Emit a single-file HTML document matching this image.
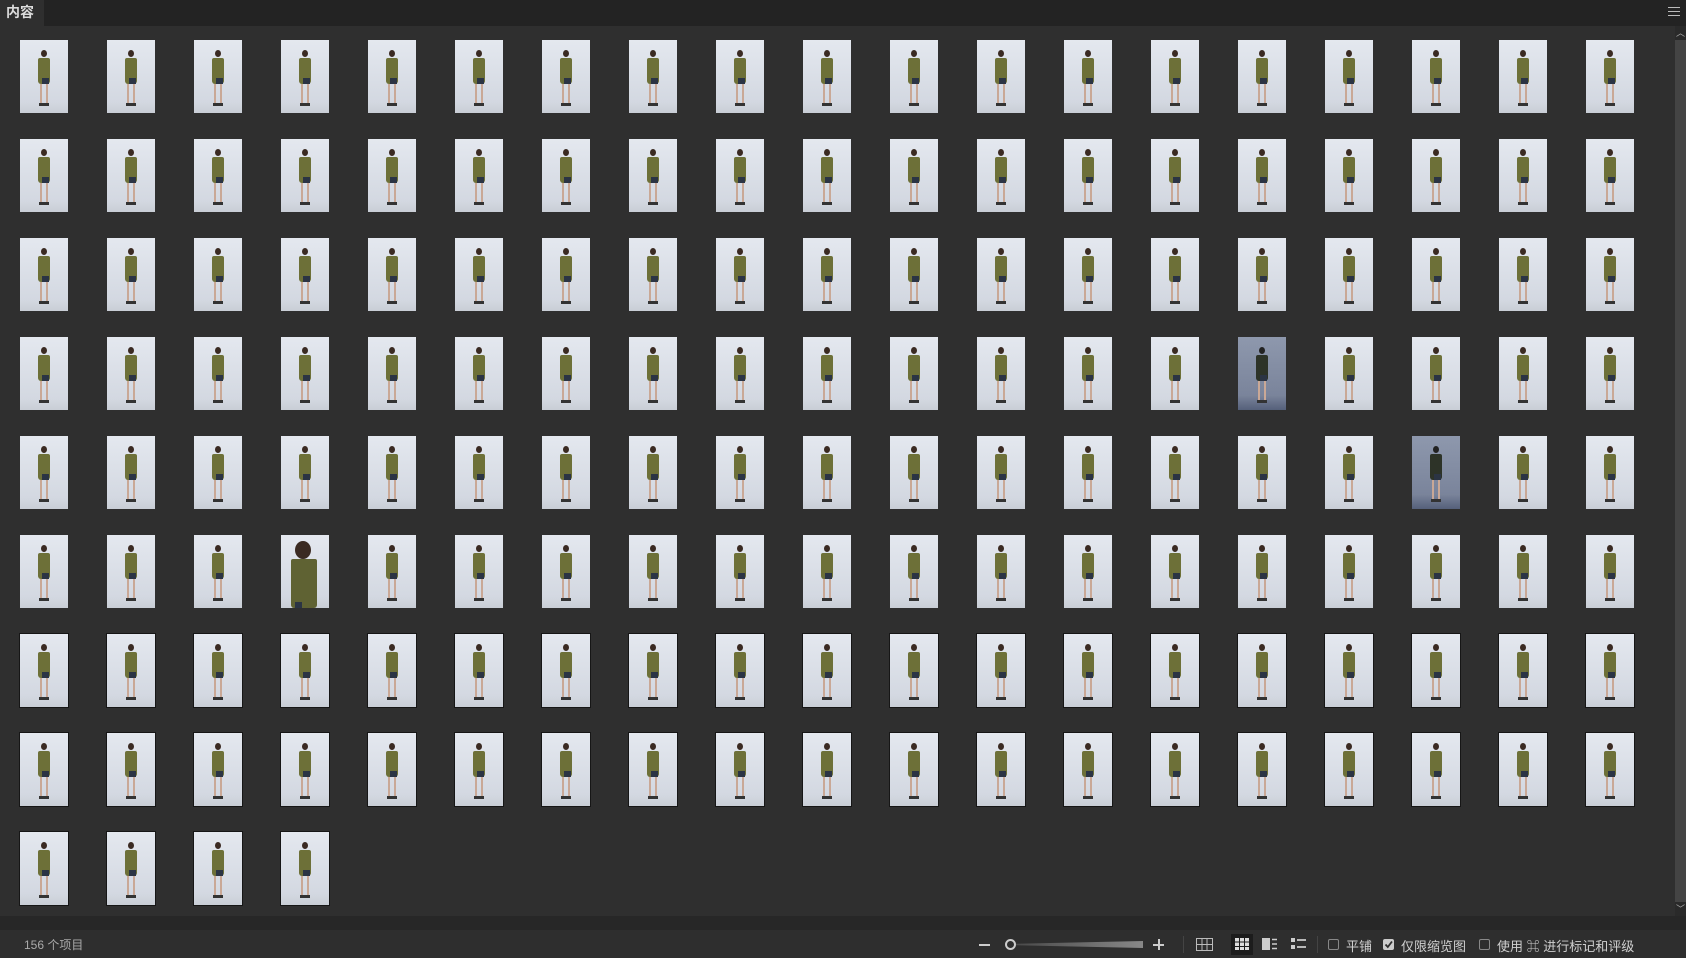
<!DOCTYPE html>
<html><head><meta charset="utf-8"><style>
*{margin:0;padding:0;box-sizing:border-box}
body{width:1686px;height:958px;background:#2f2f2f;overflow:hidden;position:relative;font-family:"Liberation Sans","Noto Sans CJK SC",sans-serif;color:#c8c8c8}
#hdr{position:absolute;left:0;top:0;width:1686px;height:26px;background:#232323}
#tab{position:absolute;left:0;top:0;width:44px;height:26px;background:#2f2f2f;color:#ddd;font-size:14px;font-weight:bold;line-height:25px;padding-left:6px}
#menu{position:absolute;right:6px;top:7px;width:12px}
#menu i{display:block;height:1px;background:#bbb;margin-bottom:3px}
#sb{position:absolute;left:1675px;top:26px;width:11px;height:890px;background:#444}
#sb .a{position:absolute;left:0;width:11px;height:14px;background:#2a2a2a;color:#aaa;font-size:9px;text-align:center;line-height:14px}
.t{position:absolute;width:48px;height:73px;background:linear-gradient(#e4e8ef,#d3d8e1 85%,#c9ced6);overflow:hidden}
.t.b{outline:1.5px solid #161616}
.t.d{background:linear-gradient(#8e98ad,#7a849b 80%,#55607a)}
.t .h{position:absolute;left:21px;top:10px;width:6px;height:7px;border-radius:50%;background:#3a2a22}
.t .s{position:absolute;left:18px;top:18px;width:12px;height:26px;background:#6d7038;border-radius:2px 2px 3px 3px}
.t .s:after{content:"";position:absolute;left:4px;bottom:0;width:7px;height:6px;background:#2b3444}
.t .l{position:absolute;left:20px;top:44px;width:8px;height:20px;border-left:2px solid #c9a896;border-right:2px solid #c9a896}
.t .f{position:absolute;left:19px;top:63px;width:10px;height:3px;background:#333}
.t.d .s{background:#2d3328}.t.d .h{background:#222}
.t.c .h{left:14px;top:6px;width:16px;height:18px}
.t.c .s{left:10px;top:24px;width:26px;height:49px;background:#5f6233}
#strip{position:absolute;left:0;top:916px;width:1686px;height:14px;background:#272727}
#st{position:absolute;left:0;top:930px;width:1686px;height:28px;background:#2e2e2e;font-size:13px}
#st span{position:absolute;top:6px;white-space:nowrap;color:#d0d0d0}
.cb{position:absolute;top:9px;width:11px;height:11px;border:1px solid #888;border-radius:2px}
.ic{position:absolute;top:8px}
</style></head><body>
<div id="hdr"><div id="tab">内容</div><div id="menu"><i></i><i></i><i></i></div></div>
<div id="grid"></div>
<div id="sb"><div class="a" style="top:0">︿</div><div class="a" style="bottom:0">﹀</div></div>
<div id="strip"></div>
<div id="st">
<span style="left:24px;color:#aaa;font-size:12px">156 个项目</span>
<div style="position:absolute;left:979px;top:14px;width:11px;height:1.5px;background:#ccc"></div>
<div style="position:absolute;left:1016px;top:11px;width:127px;height:7px;background:linear-gradient(90deg,#4a4a4a 0,#888 100%);clip-path:polygon(0 40%,100% 0,100% 100%,0 60%)"></div>
<div style="position:absolute;left:1005px;top:9px;width:11px;height:11px;border:2px solid #ccc;border-radius:50%;background:#2e2e2e"></div>
<div style="position:absolute;left:1153px;top:14px;width:11px;height:1.5px;background:#ccc"></div>
<div style="position:absolute;left:1158px;top:9px;width:1.5px;height:11px;background:#ccc"></div>
<div style="position:absolute;left:1183px;top:6px;width:1px;height:17px;background:#444"></div>
<svg class="ic" style="left:1196px" width="17" height="13"><rect x=".5" y=".5" width="16" height="12" fill="none" stroke="#bbb"/><path d="M6 0V13M11 0V13M0 6.5H17" stroke="#bbb"/></svg>
<div style="position:absolute;left:1231px;top:4px;width:22px;height:21px;background:#1c1c1c"></div>
<svg class="ic" style="left:1235px" width="14" height="12"><g fill="#ddd"><rect x="0" y="0" width="4" height="3.5"/><rect x="5" y="0" width="4" height="3.5"/><rect x="10" y="0" width="4" height="3.5"/><rect x="0" y="4.5" width="4" height="3.5"/><rect x="5" y="4.5" width="4" height="3.5"/><rect x="10" y="4.5" width="4" height="3.5"/><rect x="0" y="9" width="4" height="3"/><rect x="5" y="9" width="4" height="3"/><rect x="10" y="9" width="4" height="3"/></g></svg>
<svg class="ic" style="left:1262px" width="15" height="12"><rect x="0" y="0" width="8" height="12" fill="#ccc"/><path d="M10 1.5H15M10 6H15M10 10.5H15" stroke="#ccc" stroke-width="1.5"/></svg>
<svg class="ic" style="left:1291px" width="15" height="12"><rect x="0" y="0" width="4" height="4" fill="#ccc"/><rect x="0" y="7" width="4" height="4" fill="#ccc"/><path d="M6 2H15M6 9H15" stroke="#ccc" stroke-width="1.8"/></svg>
<div style="position:absolute;left:1317px;top:6px;width:1px;height:17px;background:#444"></div>
<div class="cb" style="left:1328px"></div><span style="left:1346px">平铺</span>
<div class="cb" style="left:1383px;background:#ccc;border-color:#ccc"><svg width="9" height="9" style="position:absolute;left:0;top:0"><path d="M1.5 4.5L3.8 7L8 1.5" stroke="#2e2e2e" stroke-width="1.8" fill="none"/></svg></div><span style="left:1401px">仅限缩览图</span>
<div class="cb" style="left:1479px"></div><span style="left:1497px">使用 ⌘ 进行标记和评级</span>
</div>
<script>
var g=document.getElementById('grid'),h='';
for(var i=0;i<156;i++){var r=Math.floor(i/19),c=i%19;var cls='t';
if(r>=6)cls+=' b';
if(r==3&&c==14||r==4&&c==16)cls+=' d';
if(r==5&&c==3)cls+=' c';
var x=20+c*87,y=40+r*99;
h+='<div class="'+cls+'" style="left:'+x+'px;top:'+y+'px"><div class="h"></div><div class="s"></div>'+(cls.indexOf(' c')<0?'<div class="l"></div><div class="f"></div>':'')+'</div>';}
g.innerHTML=h;
</script>
</body></html>
